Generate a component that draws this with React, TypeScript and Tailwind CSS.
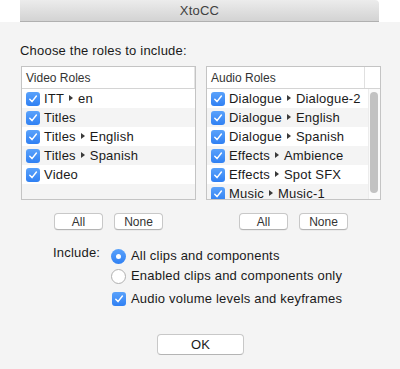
import React from "react";

const font = { fontFamily: '"Liberation Sans", Arial, sans-serif' };

function Check({ size = 14 }: { size?: number }) {
  return (
    <span
      className="flex items-center justify-center rounded-[3px] bg-gradient-to-b from-[#5aa2fb] to-[#2f80f3] shrink-0"
      style={{ width: size, height: size }}
    >
      <svg width="10" height="10" viewBox="0 0 10 10">
        <path d="M1.8 5.3 L4 7.6 L8.4 2" fill="none" stroke="white" strokeWidth="1.5" strokeLinecap="round" strokeLinejoin="round" />
      </svg>
    </span>
  );
}

function Tri() {
  return (
    <svg width="4" height="6" viewBox="0 0 4 6" className="inline-block mx-[5px] relative top-[-1px]">
      <path d="M0 0 L4 3 L0 6 Z" fill="#3a3a3a" />
    </svg>
  );
}

function Role({ a, b, odd }: { a: string; b?: string; odd: boolean }) {
  return (
    <div className={`flex items-center h-[19px] pl-[4px] ${odd ? "bg-white" : "bg-[#f4f4f4]"}`}>
      <Check />
      <span className="ml-[4px] text-[13px] tracking-[0.2px] text-[#1a1a1a] whitespace-nowrap">
        {a}
        {b && (
          <>
            <Tri />
            {b}
          </>
        )}
      </span>
    </div>
  );
}

function Btn({ label, w }: { label: string; w: string }) {
  return (
    <div
      className={`${w} h-[17px] flex items-center justify-center rounded-[4px] bg-white border border-[#c8c8c8] border-b-[#b4b4b4] shadow-[0_0.5px_0.5px_rgba(0,0,0,0.08)] text-[12px] text-[#333]`}
    >
      {label}
    </div>
  );
}

export default function App() {
  const video: [string, string?][] = [
    ["ITT", "en"],
    ["Titles"],
    ["Titles", "English"],
    ["Titles", "Spanish"],
    ["Video"],
  ];
  const audio: [string, string][] = [
    ["Dialogue", "Dialogue-2"],
    ["Dialogue", "English"],
    ["Dialogue", "Spanish"],
    ["Effects", "Ambience"],
    ["Effects", "Spot SFX"],
    ["Music", "Music-1"],
  ];
  return (
    <div className="w-[400px] h-[369px] bg-[#f4f4f4] flex flex-col overflow-hidden text-[#1a1a1a]" style={font}>
      <div className="bg-white h-[22px] pl-[20px] pr-[21px] flex">
        <div className="flex-1 h-[22px] bg-gradient-to-b from-[#ececec] to-[#d3d3d3] border-b border-[#b0b0b0] rounded-tr-[4px] flex items-center justify-center text-[13px] tracking-[0.2px] text-[#404040]">
          XtoCC
        </div>
      </div>
      <div className="mt-[21px] pl-[20px] text-[13px] tracking-[0.2px] leading-[16px]">Choose the roles to include:</div>
      <div className="mt-[7px] flex pl-[21px] gap-[10px]">
        <div className="flex flex-col">
          <div className="w-[175px] h-[134px] border border-[#c4c4c4] bg-[#f4f4f4] flex flex-col overflow-hidden">
            <div className="h-[22px] shrink-0 bg-white border-b border-[#d4d4d4] flex items-center pl-[4px] text-[12px] text-[#333] relative">
              Video Roles
              <div className="absolute right-0 top-0 h-[21px] border-l border-[#e4e4e4]" />
            </div>
            {video.map((r, i) => (
              <Role key={i} a={r[0]} b={r[1]} odd={i % 2 === 0} />
            ))}
          </div>
          <div className="mt-[13px] flex justify-center gap-[11px]">
            <Btn label="All" w="w-[49px]" />
            <Btn label="None" w="w-[49px]" />
          </div>
        </div>
        <div className="flex flex-col">
          <div className="w-[175px] h-[134px] border border-[#c4c4c4] bg-white flex flex-col overflow-hidden relative">
            <div className="h-[22px] shrink-0 bg-white border-b border-[#d4d4d4] flex items-center pl-[4px] text-[12px] text-[#333] relative">
              Audio Roles
              <div className="absolute left-[157px] top-0 h-[21px] border-l border-[#e0e0e0]" />
            </div>
            <div className="w-[161px]">
              {audio.map((r, i) => (
                <Role key={i} a={r[0]} b={r[1]} odd={i % 2 === 0} />
              ))}
            </div>
            <div className="absolute left-[161px] top-[22px] bottom-0 w-[13px] bg-[#fafafa] border-l border-[#ececec]">
              <div className="absolute left-[1px] top-[3px] w-[8px] h-[101px] rounded-full bg-[#c2c2c2]" />
            </div>
          </div>
          <div className="mt-[13px] flex justify-center gap-[11px]">
            <Btn label="All" w="w-[49px]" />
            <Btn label="None" w="w-[49px]" />
          </div>
        </div>
      </div>
      <div className="mt-[16px] flex pl-[53px]">
        <div className="w-[58px] text-[13px] tracking-[0.2px] leading-[16px] -mt-[1px]">Include:</div>
        <div className="flex flex-col">
          <div className="flex items-center h-[20px]">
            <span className="w-[15px] h-[15px] rounded-full bg-gradient-to-b from-[#5aa2fb] to-[#2f80f3] flex items-center justify-center">
              <span className="w-[5px] h-[5px] rounded-full bg-white" />
            </span>
            <span className="ml-[5px] text-[13px] tracking-[0.2px]">All clips and components</span>
          </div>
          <div className="flex items-center h-[20px]">
            <span className="w-[15px] h-[15px] rounded-full bg-white border border-[#b0b0b0]" />
            <span className="ml-[5px] text-[13px] tracking-[0.2px]">Enabled clips and components only</span>
          </div>
          <div className="flex items-center h-[20px] mt-[3px] pl-[1px]">
            <Check />
            <span className="ml-[5px] text-[13px] tracking-[0.2px]">Audio volume levels and keyframes</span>
          </div>
        </div>
      </div>
      <div className="mt-[25px] flex justify-center pl-[1px]">
        <div className="w-[87px] h-[21px] rounded-[4px] bg-white border border-[#c8c8c8] border-b-[#b4b4b4] flex items-center justify-center text-[13px] text-[#1a1a1a]">
          OK
        </div>
      </div>
    </div>
  );
}
